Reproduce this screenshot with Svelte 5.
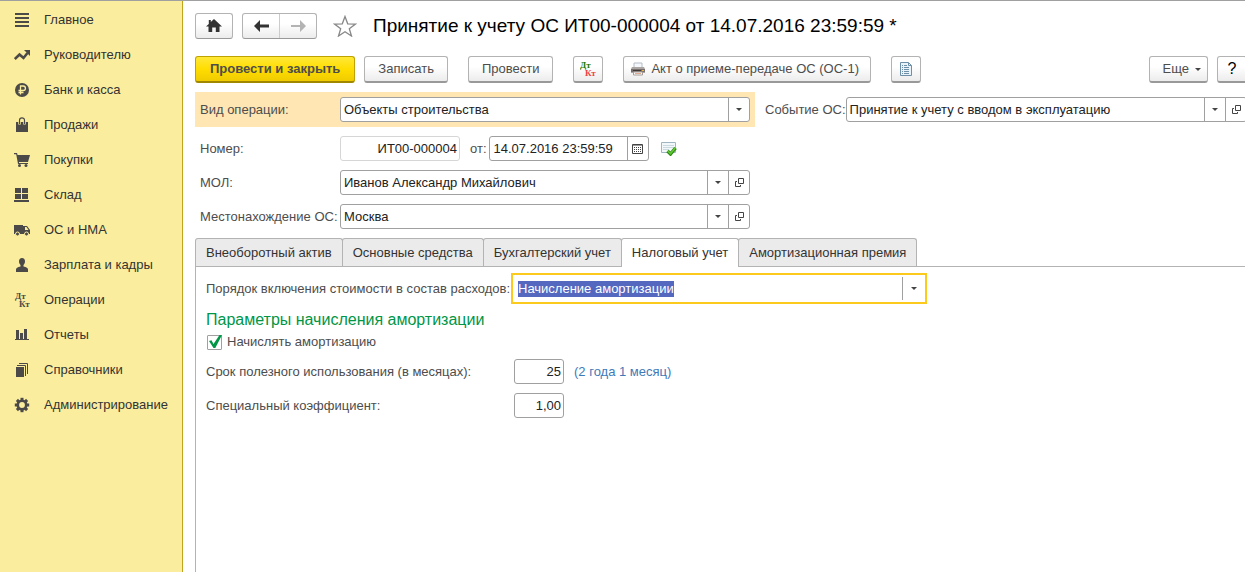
<script>
	import { onMount } from "svelte";

	const sections = [
		{ icon: "menu", title: "Главное" },
		{ icon: "trend", title: "Руководителю" },
		{ icon: "ruble", title: "Банк и касса" },
		{ icon: "bag", title: "Продажи" },
		{ icon: "cart", title: "Покупки" },
		{ icon: "store", title: "Склад" },
		{ icon: "truck", title: "ОС и НМА" },
		{ icon: "person", title: "Зарплата и кадры" },
		{ icon: "dtkt", title: "Операции" },
		{ icon: "chart", title: "Отчеты" },
		{ icon: "books", title: "Справочники" },
		{ icon: "gear", title: "Администрирование" },
	];
	const tabs = [
		"Внеоборотный актив",
		"Основные средства",
		"Бухгалтерский учет",
		"Налоговый учет",
		"Амортизационная премия",
	];
	const teeth = [0, 45, 90, 135, 180, 225, 270, 315];

	let activeTab = "Налоговый учет";
	let charge = true;
	let costInput;

	onMount(() => {
		costInput.focus();
		costInput.select();
	});
</script>

<div class="app">
	<nav class="sidebar">
		{#each sections as { icon, title }}
			<a href="#{icon}">
				<svg width="16" height="16" viewBox="0 0 16 16" fill="#4b4a48" aria-hidden="true">
					{#if icon === "menu"}
						<path d="M1 1h14v2H1zM1 5h14v2H1zM1 9h14v2H1zM1 13h14v2H1z" />
					{:else if icon === "trend"}
						<path d="M.8 12 5.500 7.500l4 3.500L13.500 6" fill="none" stroke="#4b4a48" stroke-width="2.600" />
						<path d="M10 3h6v6z" />
					{:else if icon === "ruble"}
						<circle cx="8" cy="8" r="7" />
						<path d="M6.500 12.500V4h2.700a2.200 2.200 0 0 1 0 4.500H4.500M4.500 10.500h5" fill="none" stroke="#fbed9e" stroke-width="1.300" />
					{:else if icon === "bag"}
						<path d="M2 5h12v10H2z" />
						<path d="M5.500 7.500V3.500a2.500 2.500 0 0 1 5 0v4" fill="none" stroke="#fbed9e" stroke-width="2.600" />
						<path d="M5.500 7V3.300a2.500 2.500 0 0 1 5 0V7" fill="none" stroke="#4b4a48" stroke-width="1.200" />
					{:else if icon === "cart"}
						<path d="M0 1h3l.6 2H16l-2 7H5v1h9v1H4L2.200 2.300H0z" />
						<circle cx="5.500" cy="13.500" r="1.500" />
						<circle cx="12" cy="13.500" r="1.500" />
					{:else if icon === "store"}
						<path d="M1 1h6v5H1zM8 1h6v5H8zM1 7h6v5H1zM8 7h6v5H8zM0 13h15v2H0z" />
					{:else if icon === "truck"}
						<path d="M0 3h9v9H0z" />
						<path fill-rule="evenodd" d="M9 4h4l3 4v4H9zM11 5v3h3.500l-2-3z" />
						<circle cx="3.500" cy="12" r="2" stroke="#fbed9e" />
						<circle cx="12.500" cy="12" r="2" stroke="#fbed9e" />
					{:else if icon === "person"}
						<path d="M8 1c2 0 3 1.400 3 3.500 0 1.500-.7 2.700-1.500 3.500v1.500c3 .5 4.500 1.500 4.500 3V15H2v-2.500c0-1.500 1.500-2.500 4.500-3V8C5.700 7.200 5 6 5 4.500 5 2.400 6 1 8 1z" />
					{:else if icon === "dtkt"}
						<text x="1" y="7" class="ledger">Дт</text>
						<text x="5" y="15" class="ledger">Кт</text>
					{:else if icon === "chart"}
						<path d="M2 3h3v9H2zM6 6h3v6H6zM10 2h3v10h-3zM1 12h14v1H1z" />
					{:else if icon === "books"}
						<path d="M2 5h8v10H2z" />
						<path d="M3 3.500h8.500V14M5 1.500h8.500V12" fill="none" stroke="#4b4a48" />
					{:else}
						<circle cx="8" cy="8" r="4.200" fill="none" stroke="#4b4a48" stroke-width="2.600" />
						{#each teeth as angle}
							<path d="M6.500.8h3v2.700h-3z" transform="rotate({angle} 8 8)" />
						{/each}
					{/if}
				</svg>
				{title}
			</a>
		{/each}
	</nav>

	<main>
		<header>
			<button class="square" aria-label="Начальная страница">
				<svg width="16" height="14" viewBox="0 0 16 14" fill="#333"><path d="M8 0 16 7.500h-2.500V13H9.800V8.500H6.200V13H2.500V7.500H0L2.800 5V1h2v2z" /></svg>
			</button>
			<div class="history">
				<button aria-label="Назад">
					<svg width="15" height="12" viewBox="0 0 15 12" fill="#333"><path d="M6 0v4.500h9v3H6V12L0 6z" /></svg>
				</button>
				<button aria-label="Вперед" disabled>
					<svg width="15" height="12" viewBox="0 0 15 12" fill="#b3b3b3"><path d="M9 0v5H0v2h9v5l6-6z" /></svg>
				</button>
			</div>
			<button class="star" aria-label="В избранное">
				<svg width="24" height="22" viewBox="0 0 24 22" fill="none" stroke="#888" stroke-width="1.300"><path d="m12 1.500 2.700 7.300 7.800.2-6.200 4.700 2.200 7.300-6.500-4.300L5.500 21l2.200-7.300L1.500 9l7.800-.2z" /></svg>
			</button>
			<h1>Принятие к учету ОС ИТ00-000004 от 14.07.2016 23:59:59 *</h1>
		</header>

		<div class="toolbar">
			<button class="primary">Провести и закрыть</button>
			<button>Записать</button>
			<button class="apart">Провести</button>
			<button class="apart square" aria-label="Движения документа">
				<svg width="16" height="16" viewBox="0 0 16 16">
					<text x="0" y="7" class="ledger" fill="#1d7a00">Дт</text>
					<text x="5" y="15" class="ledger" fill="#f04040">Кт</text>
				</svg>
			</button>
			<button class="apart print">
				<svg width="14" height="14" viewBox="0 0 14 14">
					<path d="M3 1h8v5H3z" fill="#f4f7fb" stroke="#b5bcc6" />
					<path d="M1 5h12l1 2v4H0V7z" fill="#aaa5a2" />
					<path d="M0 7h14v3H0z" fill="#77706e" />
					<path d="M2 8h8v1H2z" fill="#3c3937" />
					<path d="M11 8h2v1h-2z" fill="#e9b44a" />
					<path d="M2.500 10h9v3h-9z" fill="#fff" stroke="#a59c98" />
					<path d="M4 11h6v1H4z" fill="#e3a98e" />
				</svg>
				Акт о приеме-передаче ОС (ОС-1)
			</button>
			<button class="apart square" aria-label="Реестр документов">
				<svg width="12" height="14" viewBox="0 0 12 14" fill="none" stroke="#6d8fa8">
					<path d="M.5.5h8l3 3v10H.5z" fill="#eaf3fa" />
					<path d="M8.500.5v3h3M2 3.500h1M4 3.500h3M2 5.500h1M4 5.500h5M2 7.500h1M4 7.500h5M2 9.500h1M4 9.500h5M2 11.500h1M4 11.500h5" />
				</svg>
			</button>
			<button class="more">Еще <i class="caret"></i></button>
			<button class="square help" aria-label="Справка">?</button>
		</div>

		<form on:submit|preventDefault>
			<div class="row">
				<div class="band">
					<label for="operation">Вид операции:</label>
					<div class="field">
						<select id="operation"><option>Объекты строительства</option></select>
						<i class="caret"></i>
					</div>
				</div>
				<label for="event">Событие ОС:</label>
				<div class="field event">
					<select id="event"><option>Принятие к учету с вводом в эксплуатацию</option></select>
					<i class="caret"></i>
					{@render openButton("Открыть событие")}
				</div>
			</div>
			<div class="row">
				<label for="number">Номер:</label>
				<input id="number" class="box number" value="ИТ00-000004" readonly />
				<label for="date" class="from">от:</label>
				<div class="field date">
					<input id="date" value="14.07.2016 23:59:59" />
					<button type="button" aria-label="Выбрать дату">
						<svg width="11" height="10" viewBox="0 0 11 10"><path d="M.5.5h10v9H.5z" fill="none" stroke="#444" /><path d="M1 1.500h9" stroke="#999" /><path d="M2 3.500h7M2 5.500h7M2 7.500h7" stroke="#444" stroke-dasharray="1 1" /></svg>
					</button>
				</div>
				<svg class="posted" width="16" height="14" viewBox="0 0 16 14">
					<path d="M.5.500h14v10H.5z" fill="#f2f7fa" stroke="#9fb6c2" />
					<path d="M2 3.500h11M2 5.500h11M2 7.500h6" stroke="#cbd9e0" />
					<path d="m6.500 9 3 3 5-6" fill="none" stroke="#2b8a12" stroke-width="3.400" />
					<path d="m6.800 9 2.700 2.600 4.700-5.600" fill="none" stroke="#63c832" stroke-width="1.600" />
				</svg>
			</div>
			<div class="row">
				<label for="person">МОЛ:</label>
				<div class="field">
					<select id="person"><option>Иванов Александр Михайлович</option></select>
					<i class="caret"></i>
					{@render openButton("Открыть МОЛ")}
				</div>
			</div>
			<div class="row">
				<label for="place">Местонахождение ОС:</label>
				<div class="field">
					<select id="place"><option>Москва</option></select>
					<i class="caret"></i>
					{@render openButton("Открыть местонахождение")}
				</div>
			</div>

			<div class="tabs" role="tablist">
				{#each tabs as tab}
					<button type="button" role="tab" aria-selected={tab === activeTab} class:active={tab === activeTab} on:click={() => (activeTab = tab)}>{tab}</button>
				{/each}
			</div>

			<section class="panel">
				<div class="cost">
					<label for="cost">Порядок включения стоимости в состав расходов:</label>
					<div class="focus">
						<input id="cost" bind:this={costInput} value="Начисление амортизации" />
						<button type="button" aria-label="Выбрать порядок"><i class="caret"></i></button>
					</div>
				</div>
				<h2>Параметры начисления амортизации</h2>
				<label class="check">
					<input type="checkbox" bind:checked={charge} />
					{#if charge}
						<svg width="15" height="15" viewBox="0 0 15 15"><path d="m2 6 2.500-.7L6.500 9 12.500 0H15L8.300 13H6.500z" fill="#009646" /></svg>
					{/if}
					<span>Начислять амортизацию</span>
				</label>
				<div class="param">
					<label for="term">Срок полезного использования (в месяцах):</label>
					<input id="term" class="box" value="25" />
					<span class="hint">(2 года 1 месяц)</span>
				</div>
				<div class="param">
					<label for="ratio">Специальный коэффициент:</label>
					<input id="ratio" class="box" value="1,00" />
				</div>
			</section>
		</form>
	</main>
</div>

{#snippet openButton(title)}
	<button type="button" aria-label={title}>
		<svg width="9" height="9" viewBox="0 0 9 9" fill="none" stroke="#444"><path d="M3.500.5h5v5h-5zM2 3.500H.5v5h5V7" /></svg>
	</button>
{/snippet}

<style>
	:global(body) {
		background: #fff;
	}
	.app {
		display: flex;
		min-height: 100vh;
		box-sizing: border-box;
		border-top: 1px solid #a0a0a0;
		overflow: hidden;
		color: #4d4d4d;
		font: 13px/16px "Liberation Sans", Arial, sans-serif;
	}
	button, input, select {
		box-sizing: border-box;
		margin: 0;
		padding: 0;
		border: 0;
		background: none;
		color: inherit;
		font: inherit;
		outline: none;
	}
	svg {
		display: block;
		flex: none;
	}
	.ledger {
		font: bold 9px "Liberation Serif", serif;
	}

	.sidebar {
		flex: none;
		box-sizing: border-box;
		width: 183px;
		padding-top: 1px;
		border-right: 1px solid #c0a41c;
		background: #fbed9e;
	}
	.sidebar a {
		display: flex;
		align-items: center;
		gap: 14px;
		height: 35px;
		padding-left: 14px;
		color: #333;
		text-decoration: none;
	}

	main {
		flex: 1;
		min-width: 0;
		display: flex;
		flex-direction: column;
		margin-right: -2px;
		padding: 12px 0 0 12px;
	}
	header {
		display: flex;
		align-items: center;
		height: 26px;
	}
	h1 {
		margin: 0 0 0 16px;
		color: #000;
		font-size: 19px;
		font-weight: normal;
		line-height: 26px;
		white-space: nowrap;
	}
	header .square, .history, .toolbar button {
		display: flex;
		align-items: center;
		justify-content: center;
		border: 1px solid #b3b3b3;
		border-bottom-color: #999;
		border-radius: 3px;
		background: linear-gradient(#fff 40%, #ececec);
	}
	header .square {
		width: 38px;
		height: 26px;
	}
	.history {
		box-sizing: border-box;
		width: 75px;
		height: 26px;
		margin: 0 16px 0 9px;
	}
	.history button {
		flex: 1;
		display: flex;
		align-items: center;
		justify-content: center;
		height: 24px;
	}
	.history button + button {
		border-left: 1px solid #ccc;
	}

	.toolbar {
		display: flex;
		gap: 9px;
		margin: 17px 0 9px;
	}
	.toolbar button {
		height: 27px;
		padding: 0 13px;
		border-bottom-width: 2px;
		white-space: nowrap;
	}
	.toolbar .apart {
		margin-left: 11px;
	}
	.toolbar .square {
		width: 30px;
		padding: 0;
	}
	.toolbar .primary {
		padding: 0 14px;
		border-color: #bfa100;
		border-bottom-color: #a08700;
		background: linear-gradient(#ffe838, #ffdd00 50%, #efcb00);
		font-weight: bold;
	}
	.toolbar .print {
		gap: 6px;
		padding: 0 11px 0 7px;
	}
	.toolbar .more {
		gap: 6px;
		margin-left: auto;
		padding: 0 6px 0 13px;
	}
	.toolbar .help {
		color: #000;
		font-size: 16px;
	}
	.caret {
		align-self: center;
		justify-self: center;
		width: 0;
		border: 3px solid transparent;
		border-top-color: #444;
		border-bottom: 0;
	}

	form {
		flex: 1;
		display: flex;
		flex-direction: column;
	}
	.row {
		display: flex;
		align-items: center;
		margin-bottom: 9px;
	}
	.row > label:first-child, .band label {
		flex: none;
		box-sizing: border-box;
		width: 145px;
		padding-left: 5px;
		white-space: nowrap;
	}
	.band {
		display: flex;
		align-items: center;
		height: 35px;
		margin-right: 10px;
		padding-right: 5px;
		background: #ffe6b3;
	}
	.field {
		display: grid;
		grid-template: 100% / 1fr 21px;
		grid-auto-columns: 21px;
		box-sizing: border-box;
		width: 410px;
		height: 25px;
		border: 1px solid #a0a0a0;
		border-radius: 3px;
		background: #fff;
	}
	.field select {
		grid-area: 1 / 1 / 2 / 3;
		min-width: 0;
		padding: 0 24px 0 3px;
		appearance: none;
		color: #222;
		background: linear-gradient(#a0a0a0, #a0a0a0) right 20px top / 1px 100% no-repeat;
	}
	.field .caret {
		grid-area: 1 / 2;
		pointer-events: none;
	}
	.field button {
		grid-row: 1;
		display: grid;
		place-items: center;
		border-left: 1px solid #a0a0a0;
	}
	.event {
		flex: 1;
	}
	.box {
		width: 50px;
		height: 25px;
		padding: 0 2px;
		border: 1px solid #a0a0a0;
		border-radius: 3px;
		color: #222;
		text-align: right;
	}
	.number {
		width: 120px;
		border-color: #d6d6d6;
	}
	.from {
		margin: 0 2px 0 10px;
	}
	.date {
		width: 160px;
	}
	.date input {
		grid-row: 1;
		min-width: 0;
		padding-left: 4px;
		color: #222;
	}
	.posted {
		margin-left: 12px;
	}

	.tabs {
		display: flex;
		border-bottom: 1px solid #b3b3b3;
	}
	.tabs button {
		height: 28px;
		margin-right: -1px;
		padding: 0 10px;
		border: 1px solid #b3b3b3;
		border-bottom: 0;
		border-radius: 3px 3px 0 0;
		background: #ebebeb;
		color: #333;
		white-space: nowrap;
	}
	.tabs .active {
		height: 29px;
		margin-bottom: -1px;
		background: #fff;
	}

	.panel {
		flex: 1;
		padding: 6px 0 0 10px;
		border-left: 1px solid #b3b3b3;
	}
	.cost {
		display: flex;
		align-items: center;
	}
	.cost label {
		flex: none;
		width: 305px;
		white-space: nowrap;
	}
	.focus {
		display: flex;
		align-items: center;
		box-sizing: border-box;
		width: 416px;
		height: 31px;
		border: 2px solid #fcca1d;
	}
	.focus input {
		flex: 1;
		padding-left: 5px;
	}
	.focus input::selection {
		background: #5468c0;
		color: #fff;
	}
	.focus button {
		display: grid;
		place-items: center;
		width: 23px;
		height: 23px;
		border-left: 1px solid #a0a0a0;
	}
	h2 {
		margin: 6px 0 4px;
		color: #009646;
		font-size: 16px;
		font-weight: normal;
		line-height: 20px;
	}
	.check {
		display: grid;
		grid-template-columns: 15px 1fr;
		column-gap: 5px;
		align-items: center;
		margin: 0 0 9px 1px;
	}
	.check input {
		grid-area: 1 / 1;
		width: 15px;
		height: 15px;
		appearance: none;
		border: 1px solid #a0a0a0;
		border-radius: 1px;
	}
	.check svg {
		grid-area: 1 / 1;
		pointer-events: none;
	}
	.param {
		display: flex;
		align-items: center;
		margin-bottom: 9px;
	}
	.param label {
		width: 308px;
	}
	.hint {
		margin-left: 10px;
		color: #3f7ab8;
	}
</style>
